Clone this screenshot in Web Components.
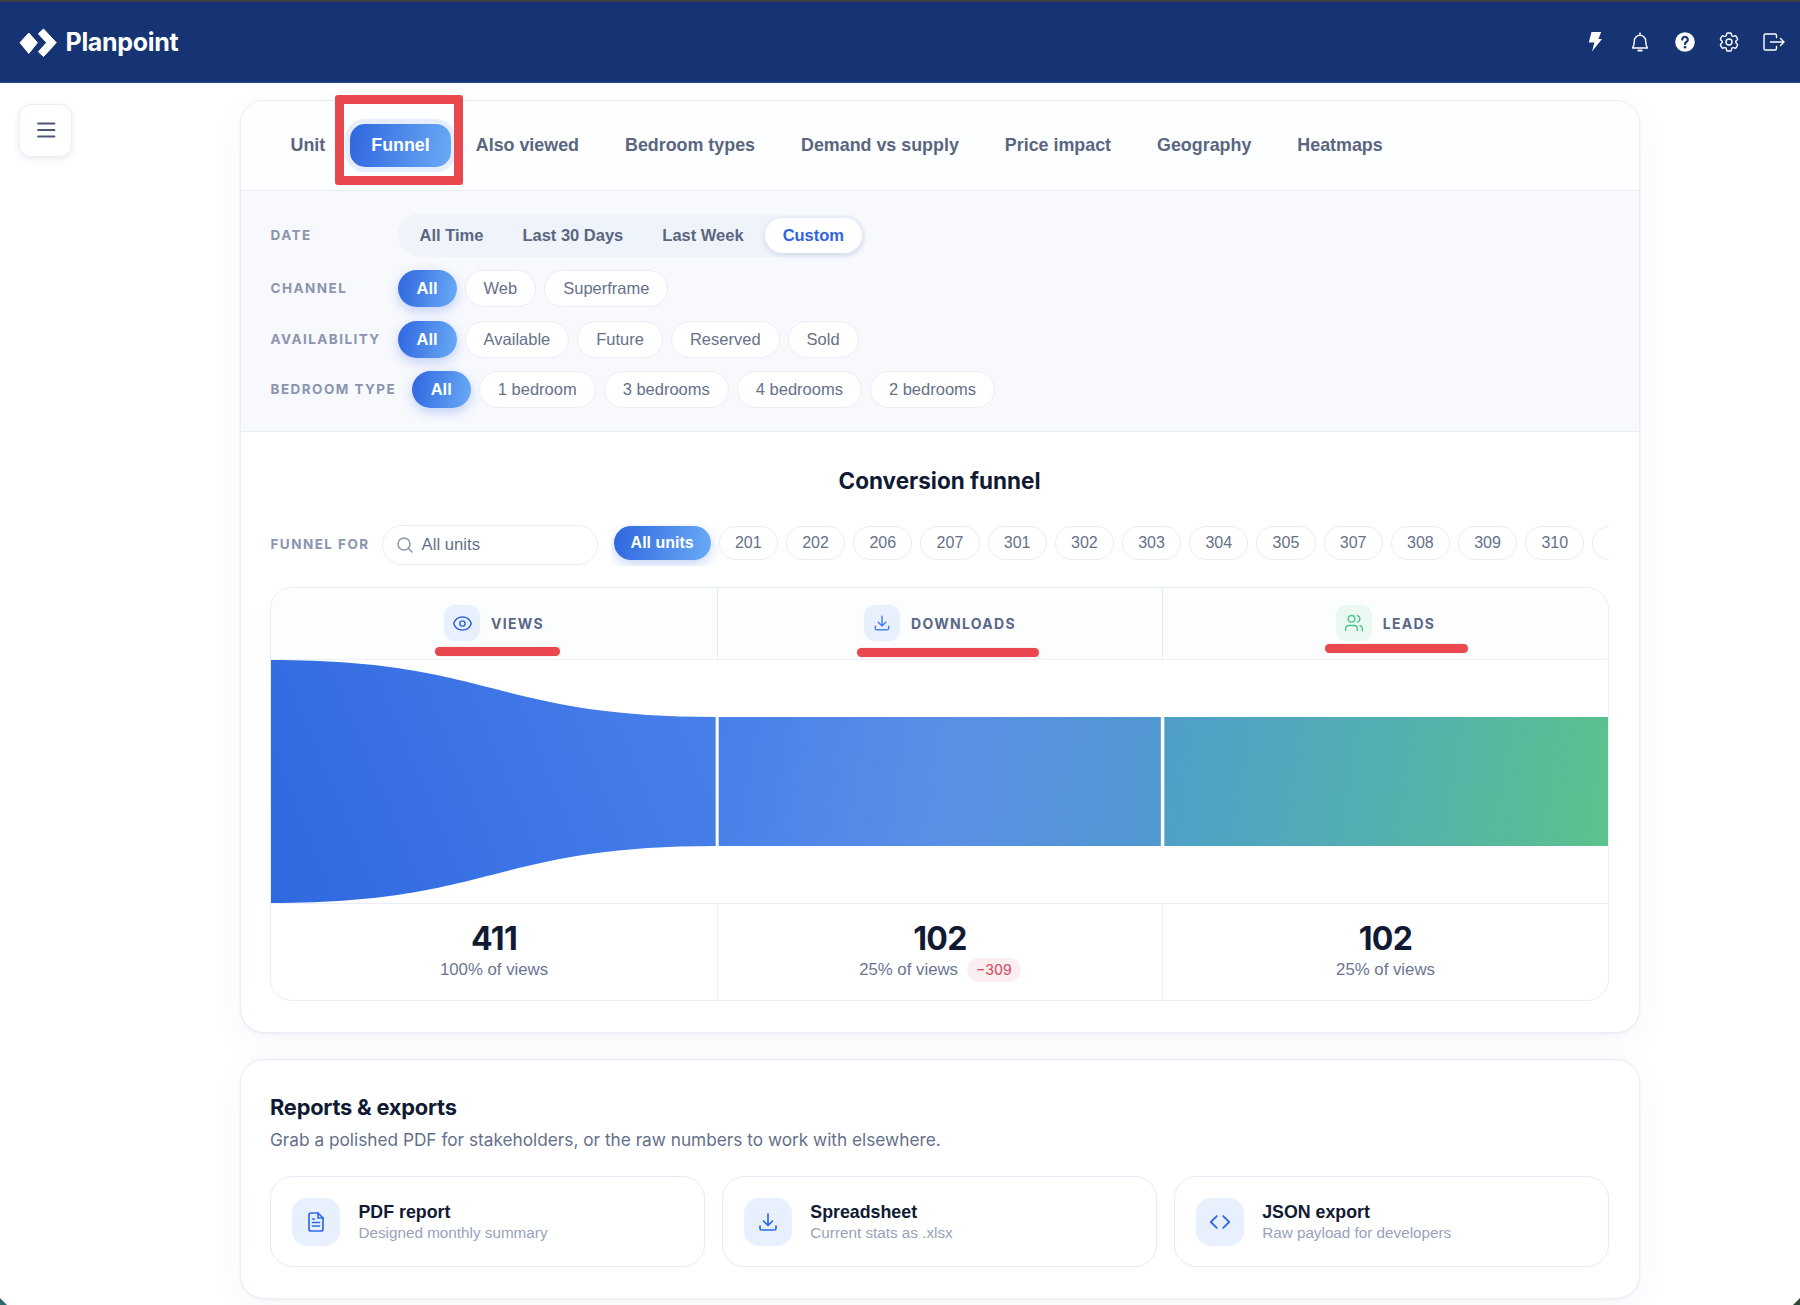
<!doctype html>
<html lang="en"><head><meta charset="utf-8"><title>Planpoint</title>
<style>
html,body{margin:0;padding:0;background:#fff}
body{font-family:"Liberation Sans",Arial,sans-serif;color:#111a33;width:1800px;height:1305px;overflow:hidden;position:relative}
</style></head>
<body>
<pp-app>
  <pp-header slot="header"></pp-header>
  <pp-menu-button slot="side"></pp-menu-button>
  <pp-card>
    <pp-tabs>
      <pp-tab>Unit</pp-tab>
      <pp-tab active marked>Funnel</pp-tab>
      <pp-tab>Also viewed</pp-tab>
      <pp-tab>Bedroom types</pp-tab>
      <pp-tab>Demand vs supply</pp-tab>
      <pp-tab>Price impact</pp-tab>
      <pp-tab>Geography</pp-tab>
      <pp-tab>Heatmaps</pp-tab>
    </pp-tabs>
    <pp-filters>
      <pp-filter-row label="Date">
        <pp-segments>
          <pp-seg>All Time</pp-seg><pp-seg>Last 30 Days</pp-seg><pp-seg>Last Week</pp-seg><pp-seg active>Custom</pp-seg>
        </pp-segments>
      </pp-filter-row>
      <pp-filter-row label="Channel">
        <pp-pill active>All</pp-pill><pp-pill>Web</pp-pill><pp-pill>Superframe</pp-pill>
      </pp-filter-row>
      <pp-filter-row label="Availability">
        <pp-pill active>All</pp-pill><pp-pill>Available</pp-pill><pp-pill>Future</pp-pill><pp-pill>Reserved</pp-pill><pp-pill>Sold</pp-pill>
      </pp-filter-row>
      <pp-filter-row label="Bedroom type">
        <pp-pill active>All</pp-pill><pp-pill>1 bedroom</pp-pill><pp-pill>3 bedrooms</pp-pill><pp-pill>4 bedrooms</pp-pill><pp-pill>2 bedrooms</pp-pill>
      </pp-filter-row>
    </pp-filters>
    <pp-funnel></pp-funnel>
  </pp-card>
  <pp-card>
    <pp-reports>
      <pp-report title-text="PDF report" sub="Designed monthly summary" icon="doc"></pp-report>
      <pp-report title-text="Spreadsheet" sub="Current stats as .xlsx" icon="download"></pp-report>
      <pp-report title-text="JSON export" sub="Raw payload for developers" icon="code"></pp-report>
    </pp-reports>
  </pp-card>
</pp-app>
<script>
const ICONS = {
  eye:'<path d="M2.036 12.322a1.012 1.012 0 010-.639C3.423 7.51 7.36 4.5 12 4.5c4.638 0 8.573 3.007 9.963 7.178.07.207.07.431 0 .639C20.577 16.49 16.64 19.5 12 19.5c-4.638 0-8.573-3.007-9.963-7.178z"/><circle cx="12" cy="12" r="3"/>',
  download:'<path d="M4 16v2.5A1.5 1.5 0 005.5 20h13a1.5 1.5 0 001.5-1.5V16"/><path d="M12 4v11.5M7.5 11l4.5 4.5 4.5-4.5"/>',
  users:'<path d="M16 21v-2a4 4 0 00-4-4H6a4 4 0 00-4 4v2"/><circle cx="9" cy="7" r="4"/><path d="M22 21v-2a4 4 0 00-3-3.87"/><path d="M16 3.13a4 4 0 010 7.75"/>',
  doc:'<path d="M14 3H7a2 2 0 00-2 2v14a2 2 0 002 2h10a2 2 0 002-2V8z"/><path d="M14 3v5h5"/><path d="M8.5 12.5h7M8.5 16h7M8.5 9h2"/>',
  code:'<path d="M9 6.5L3.5 12 9 17.5M15 6.5l5.5 5.5-5.5 5.5"/>',
};
const svg = (name, size, color, sw=1.8) => `<svg width="${size}" height="${size}" viewBox="0 0 24 24" fill="none" stroke="${color}" stroke-width="${sw}" stroke-linecap="round" stroke-linejoin="round">${ICONS[name]}</svg>`;

function def(name, css, html) {
  customElements.define(name, class extends HTMLElement {
    connectedCallback() {
      if (this.shadowRoot) return;
      const r = this.attachShadow({mode:'open'});
      r.innerHTML = `<style>${css}</style>` + (typeof html === 'function' ? html(this) : html);
    }
  });
}

def('pp-app', `
  :host{display:block;width:1800px;height:1305px;position:relative;overflow:hidden}
  .body{display:flex;align-items:flex-start}
  .side{width:80px;flex:none;padding:20.5px 0 0 19px;box-sizing:border-box}
  .main{flex:1;display:flex;flex-direction:column;align-items:center;gap:26px;padding-top:17px}
  .corner{position:absolute;bottom:0;width:7px;height:7px}
  .l{left:0;background:#2f6b6b;clip-path:polygon(0 0,100% 100%,0 100%)}
  .r{right:0;background:#2c4a35;clip-path:polygon(100% 0,100% 100%,0 100%)}
`, `<slot name="header"></slot>
  <div class="body"><div class="side"><slot name="side"></slot></div><div class="main"><slot></slot></div></div>
  <div class="corner l"></div><div class="corner r"></div>`);

def('pp-header', `
  :host{display:flex;align-items:center;justify-content:space-between;height:83px;box-sizing:border-box;background:#163473;border-top:2px solid #3b3f46;border-bottom:1px solid #2a4a8c;padding:0 14px 0 19px}
  .logo{display:flex;align-items:center;gap:8.5px}
  .name{font:700 25px/1 Inter,sans-serif;color:#fff;letter-spacing:-.3px;margin-top:.5px}
  .icons{display:flex;gap:20.7px;align-items:center}
  svg{display:block}
`, `<div class="logo">
    <svg width="38" height="29" viewBox="19 27 38 29" fill="#fff" stroke="#fff" stroke-width="1" stroke-linejoin="round"><polygon points="20,41.7 28.8,32 37.4,41.7 28.8,52.4"/><polygon points="43.5,28 56.3,41.7 43.5,55.6 38.4,50.7 46.6,41.7 38.4,32.8"/></svg>
    <span class="name">Planpoint</span>
  </div>
  <div class="icons">
    <svg width="24" height="24" viewBox="0 0 24 24" fill="#fff"><polygon points="8.5,2 18.2,2 15.4,9 19,9 9,21.5 11.4,12.6 5.8,12.6"/></svg>
    <svg width="24" height="24" viewBox="0 0 24 24" fill="none" stroke="#fff" stroke-width="1.4" stroke-linecap="round" stroke-linejoin="round"><path d="M4.5 18h15c-1.4-1.7-1.8-3.5-1.8-7a5.7 5.7 0 00-11.4 0c0 3.500-.4 5.300-1.800 7z"/><path d="M12 5.300V3"/><path d="M10.400 20.500h3.200" stroke-width="2"/></svg>
    <svg width="24" height="24" viewBox="0 0 24 24"><circle cx="12" cy="12" r="9.800" fill="#fff"/><path d="M9.200 9.600a2.800 2.800 0 115 1.700c-.9.9-2.200 1.300-2.200 2.800" fill="none" stroke="#163473" stroke-width="2.200" stroke-linecap="round"/><circle cx="12" cy="17.300" r="1.300" fill="#163473"/></svg>
    <svg width="24" height="24" viewBox="0 0 24 24" fill="none" stroke="#fff" stroke-width="1.400" stroke-linecap="round" stroke-linejoin="round"><path d="M9.594 3.940c.09-.542.56-.94 1.110-.94h2.593c.55 0 1.020.398 1.110.94l.213 1.281c.063.374.313.686.645.87.074.04.147.083.22.127.324.196.72.257 1.075.124l1.217-.456a1.125 1.125 0 011.370.49l1.296 2.247a1.125 1.125 0 01-.26 1.431l-1.003.827c-.293.24-.438.613-.431.992a6.759 6.759 0 010 .255c-.007.378.138.75.43.99l1.005.828c.424.35.534.954.26 1.430l-1.298 2.247a1.125 1.125 0 01-1.369.491l-1.217-.456c-.355-.133-.75-.072-1.076.124a6.570 6.570 0 01-.22.128c-.331.183-.581.495-.644.869l-.213 1.280c-.09.543-.56.941-1.110.941h-2.594c-.55 0-1.020-.398-1.110-.94l-.213-1.281c-.062-.374-.312-.686-.644-.87a6.520 6.520 0 01-.22-.127c-.325-.196-.72-.257-1.076-.124l-1.217.456a1.125 1.125 0 01-1.369-.49l-1.297-2.247a1.125 1.125 0 01.26-1.431l1.004-.827c.292-.24.437-.613.43-.992a6.932 6.932 0 010-.255c.007-.378-.138-.75-.43-.99l-1.004-.828a1.125 1.125 0 01-.26-1.430l1.297-2.247a1.125 1.125 0 011.370-.491l1.216.456c.356.133.751.072 1.076-.124.072-.044.146-.087.22-.128.332-.183.582-.495.644-.869l.214-1.281z"/><circle cx="12" cy="12" r="3"/></svg>
    <svg width="24" height="24" viewBox="0 0 24 24" fill="none" stroke="#fff" stroke-width="1.400" stroke-linecap="round" stroke-linejoin="round"><path d="M14.500 7.500V5.500A1.500 1.500 0 0013 4H3.500A1.500 1.500 0 002 5.500v13A1.500 1.500 0 003.500 20H13a1.500 1.500 0 001.500-1.500v-2"/><path d="M8.500 12H22M18.500 8.500L22 12l-3.500 3.500"/></svg>
  </div>`);

def('pp-menu-button', `
  :host{display:flex;align-items:center;justify-content:center;width:53px;height:53px;box-sizing:border-box;background:#fff;border:1.500px solid #eceff6;border-radius:12px;box-shadow:0 2px 7px rgba(30,50,110,.1)}
`, `<svg width="22" height="22" viewBox="0 0 22 22" fill="none" stroke="#4c5874" stroke-width="1.800" stroke-linecap="round"><path d="M3 4.500h16.500M3 11h16.500M3 17.500h16.500"/></svg>`);

def('pp-card', `
  :host{display:block;width:1400px;box-sizing:border-box;background:#fff;border:1.500px solid #e9edf6;border-radius:24px;box-shadow:0 1px 3px rgba(30,50,110,.06),0 10px 36px rgba(40,70,160,.045)}
`, `<slot></slot>`);

def('pp-tabs', `
  :host{display:flex;align-items:center;gap:4px;height:89.500px;box-sizing:border-box;padding:0 28.500px;background:#fdfeff;border-bottom:1.500px solid #e9edf6;border-radius:22.5px 22.5px 0 0}
`, `<slot></slot>`);

def('pp-tab', `
  :host{display:block;position:relative;padding:0 21px;height:43px;line-height:43px;font-size:17.860px;font-weight:700;color:#5a6680;border-radius:15px;white-space:nowrap}
  :host([active]){color:#fff;background:linear-gradient(100deg,#2f66df,#69abf5);box-shadow:0 0 0 5px #e6edfc}
  .mark{display:none;position:absolute;left:-15.500px;top:-29px;width:128px;height:90px;box-sizing:border-box;border:9px solid #e8484e;border-radius:3px}
  :host([marked]) .mark{display:block}
`, `<slot></slot><span class="mark"></span>`);

def('pp-filters', `
  :host{display:flex;flex-direction:column;gap:13.500px;padding:23px 30px 23px 29.500px;background:#f8f9fd;border-bottom:1.500px solid #e9edf6}
`, `<slot></slot>`);

def('pp-filter-row', `
  :host{display:flex;align-items:center}
  .l{min-width:111.500px;margin-right:15.500px;padding-bottom:1px;font:700 13.500px Inter,sans-serif;letter-spacing:1.450px;text-transform:uppercase;color:#8b95ae;white-space:nowrap}
  .p{display:flex;gap:8px;align-items:center}
`, h => `<span class="l">${h.getAttribute('label')}</span><div class="p"><slot></slot></div>`);

def('pp-pill', `
  :host{display:block;box-sizing:border-box;height:37px;line-height:34px;padding:0 18px;font-size:16.500px;font-weight:400;color:#667189;background:#fff;border:1.500px solid #e9edf6;border-radius:19px;white-space:nowrap}
  :host([active]){color:#fff;font-weight:700;border-color:transparent;background:linear-gradient(100deg,#2f66df,#69abf5) border-box;box-shadow:0 4px 12px rgba(47,102,223,.28)}
  :host([small]){height:34px;line-height:31px;padding:0 15.250px;font-size:16px}
  :host([small][active]){padding:0 16px}
`, `<slot></slot>`);

def('pp-segments', `
  :host{display:flex;gap:3px;padding:4px;height:43px;box-sizing:border-box;background:#eff3fa;border-radius:22px}
`, `<slot></slot>`);
def('pp-seg', `
  :host{display:block;height:35px;line-height:35px;padding:0 18px;font-size:16.500px;font-weight:700;color:#5a6680;border-radius:18px;white-space:nowrap}
  :host([active]){color:#2f63e0;background:#fff;box-shadow:0 2px 6px rgba(30,50,110,.14)}
`, `<slot></slot>`);

const UNITS = ['201','202','206','207','301','302','303','304','305','307','308','309','310'];
def('pp-funnel', `
  :host{display:block;padding:34px 30px 31px 29px}
  h2{margin:0;text-align:center;font:700 22.500px/29px Inter,sans-serif;color:#111a33}
  .for{display:flex;align-items:center;margin-top:30px;height:40px}
  .lab{font:700 13.500px/1 Inter,sans-serif;letter-spacing:1.450px;color:#8b95ae;white-space:nowrap;margin:-1px 12px 0 .5px}
  .search{flex:none;display:flex;align-items:center;gap:8px;width:216px;height:40px;box-sizing:border-box;padding:0 13px;border:1.500px solid #e9edf6;border-radius:20px;font-size:16.700px;color:#667189}
  .scroll{flex:1;min-width:0;display:flex;gap:8px;overflow:hidden;padding:2px 0 6px 3px;margin-left:13px}
  .scroll pp-pill{flex:none}
  .panel{margin-top:21.500px;border:1.500px solid #e9edf6;border-radius:22px;overflow:hidden;background:#fff}
  .row{display:grid;grid-template-columns:446px 445px 1fr}
  .h{background:#fcfdff;height:71px;border-bottom:1.500px solid #eef1f8}
  .col{position:relative;display:flex;align-items:center;justify-content:center;gap:11px;border-left:1px solid #e9edf6}
  .col:first-child{border-left:0}
  .box{width:36px;height:36px;border-radius:11px;display:flex;align-items:center;justify-content:center;background:#e8effd}
  .box.g{background:#e9f8f1}
  .t{font:700 14px Inter,sans-serif;letter-spacing:1.300px;color:#5a6785}
  .u{position:absolute;height:9px;background:#e8484e;border-radius:5px;box-shadow:0 0 1px rgba(232,72,78,.5)}
  svg.viz{display:block;width:100%;height:243px}
  .s{height:96px;border-top:1.500px solid #e9edf6}
  .stat{display:flex;flex-direction:column;align-items:center;padding-top:16px;box-sizing:border-box;border-left:1px solid #e9edf6}
  .stat:first-child{border-left:0}
  .n{font:700 32px/38px Inter,sans-serif;color:#111a33;letter-spacing:-.6px}
  .sub{display:flex;align-items:center;gap:9px;height:24px;margin-top:.5px;font-size:16.800px;color:#6a7691}
  .b{height:24px;padding:0 9px;border-radius:12px;background:#fbeef0;color:#d4566a;font:500 14px/24px Inter,sans-serif}
`, `<h2>Conversion funnel</h2>
  <div class="for">
    <span class="lab">FUNNEL FOR</span>
    <div class="search"><svg width="18" height="18" viewBox="0 0 18 18" fill="none" stroke="#8b95ae" stroke-width="1.500" stroke-linecap="round"><circle cx="8" cy="8" r="6"/><path d="M12.500 12.500L16 16"/></svg>All units</div>
    <div class="scroll"><pp-pill active small>All units</pp-pill>${UNITS.map(u=>`<pp-pill small>${u}</pp-pill>`).join('')}<pp-pill small style="width:59px"></pp-pill></div>
  </div>
  <div class="panel">
    <div class="row h">
      <div class="col"><span class="box">${svg('eye',21,'#2f66df',1.7)}</span><span class="t">VIEWS</span><span class="u" style="left:164px;width:125px;top:59px"></span></div>
      <div class="col"><span class="box">${svg('download',20,'#4a83ee',1.8)}</span><span class="t">DOWNLOADS</span><span class="u" style="left:139px;width:182px;top:60px"></span></div>
      <div class="col"><span class="box g">${svg('users',20,'#4cc38a',1.6)}</span><span class="t">LEADS</span><span class="u" style="left:162px;width:143px;top:56px"></span></div>
    </div>
    <svg class="viz" viewBox="0 0 1335 243" preserveAspectRatio="none">
      <defs>
        <linearGradient id="g1" gradientUnits="userSpaceOnUse" x1="0" y1="243" x2="445" y2="60"><stop offset="0" stop-color="#2f68e0"/><stop offset="1" stop-color="#4880ea"/></linearGradient>
        <linearGradient id="g2" gradientUnits="userSpaceOnUse" x1="446" y1="100" x2="890" y2="170"><stop offset="0" stop-color="#4880ea"/><stop offset=".5" stop-color="#5a8fe6"/><stop offset="1" stop-color="#5098cf"/></linearGradient>
        <linearGradient id="g3" gradientUnits="userSpaceOnUse" x1="892" y1="100" x2="1335" y2="170"><stop offset="0" stop-color="#4f9fc8"/><stop offset=".5" stop-color="#53afaf"/><stop offset="1" stop-color="#5bc28c"/></linearGradient>
      </defs>
      <path d="M0 0C222 0 222 57 444 57V186C222 186 222 243 0 243Z" fill="url(#g1)"/>
      <rect x="447" y="57" width="441.500" height="129" fill="url(#g2)"/>
      <rect x="892" y="57" width="443" height="129" fill="url(#g3)"/>
    </svg>
    <div class="row s">
      <div class="stat"><div class="n">411</div><div class="sub">100% of views</div></div>
      <div class="stat"><div class="n">102</div><div class="sub">25% of views <span class="b">−309</span></div></div>
      <div class="stat"><div class="n">102</div><div class="sub">25% of views</div></div>
    </div>
  </div>`);

def('pp-reports', `
  :host{display:block;padding:33px 30px 31px 29px}
  h3{margin:0;font:700 21.800px/28px Inter,sans-serif;color:#111a33;letter-spacing:-.2px}
  p{margin:7px 0 0;font:400 17.240px/24px Inter,sans-serif;color:#64708a}
  .g{display:grid;grid-template-columns:repeat(3,1fr);gap:16.500px;margin-top:24.300px}
`, `<h3>Reports &amp; exports</h3>
  <p>Grab a polished PDF for stakeholders, or the raw numbers to work with elsewhere.</p>
  <div class="g"><slot></slot></div>`);

def('pp-report', `
  :host{display:flex;align-items:center;gap:18.500px;height:91.500px;box-sizing:border-box;padding:0 21px;background:#fff;border:1.500px solid #e6eaf4;border-radius:22px}
  .i{flex:none;width:48px;height:48px;border-radius:15px;display:flex;align-items:center;justify-content:center;background:#e8f0fd}
  .t{font-size:17.800px;line-height:22px;font-weight:700;color:#111a33}
  .s{font-size:15.250px;line-height:20px;color:#98a2b8}
`, h => `<span class="i">${svg(h.getAttribute('icon'),h.getAttribute('icon')==='code'?26:24,'#2f6be6',1.700)}</span><div><div class="t">${h.getAttribute('title-text')}</div><div class="s">${h.getAttribute('sub')}</div></div>`);
</script>
</body></html>
